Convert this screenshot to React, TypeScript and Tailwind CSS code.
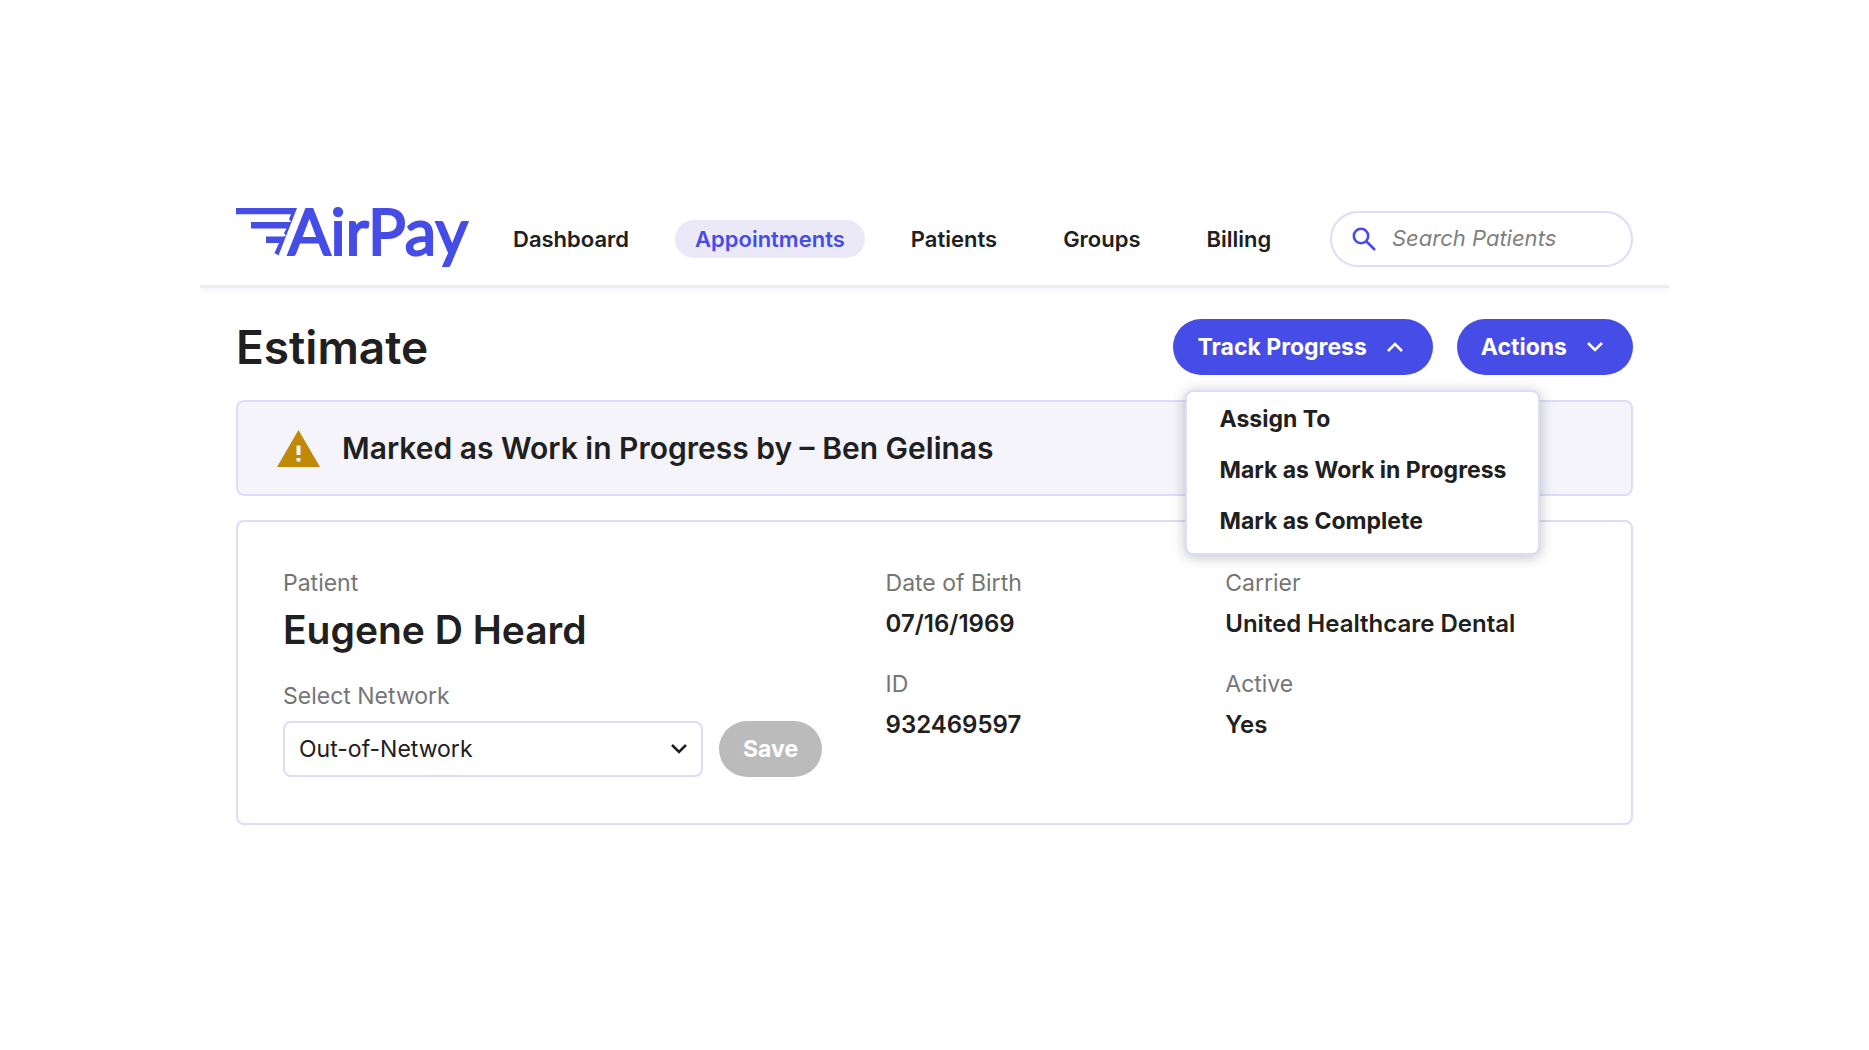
import React from 'react';

const navItems = ['Dashboard', 'Appointments', 'Patients', 'Groups', 'Billing'];
const menuItems = ['Assign To', 'Mark as Work in Progress', 'Mark as Complete'];

const Logo = () => (
  <a href="#" aria-label="AirPay" className="shrink-0">
    <svg width="233" height="64" viewBox="0 0 233 64" className="overflow-visible" fill="#464ce6">
      <path d="M0 1H61L42.500 48.500L38.500 46L43 36H30V29.500H47L50 29L48 26L50.500 21.500H15V15H55L53 12L55 7.200H0Z" />
      <text
        x="52"
        y="48"
        fontSize="63"
        fontFamily="Lato, sans-serif"
        stroke="#464ce6"
        strokeWidth="2.2"
      >
        AirPay
      </text>
    </svg>
  </a>
);

const Chevron = ({ up = false }: { up?: boolean }) => (
  <svg width="24" height="24" viewBox="0 0 24 24" fill="none" stroke="currentColor" strokeWidth="2.6">
    <path d={up ? 'M5 16l7-7 7 7' : 'M5 8l7 7 7-7'} />
  </svg>
);

const Field = ({ label, value }: { label: string; value: string }) => (
  <div>
    <dt className="text-[23px] leading-8 text-[#757575]">{label}</dt>
    <dd className="mt-[9px] text-2xl leading-8 font-semibold">{value}</dd>
  </div>
);

const Header = () => (
  <header className="flex h-24 items-center gap-6 border-b-3 border-[#ececee] px-9 shadow-[0_6px_4px_-3px_rgba(70,76,230,0.06)]">
    <Logo />
    <nav className="flex items-center gap-[26px]">
      {navItems.map((item) => (
        <a
          key={item}
          href="#"
          className={
            item === 'Appointments'
              ? 'rounded-full bg-[#ebe9f8] px-5 py-1 text-[22px] leading-[30px] font-semibold text-[#464ce6]'
              : 'px-5 py-1 text-[22px] leading-[30px] font-semibold'
          }
        >
          {item}
        </a>
      ))}
    </nav>
    <label className="ml-auto flex h-14 w-[303px] items-center gap-4 rounded-full border-2 border-[#dcdcfb] px-5">
      <svg width="24" height="24" viewBox="0 0 24 24" fill="none" stroke="#464ce6" strokeWidth="2.6" className="shrink-0">
        <circle cx="9" cy="9" r="7.2" />
        <path d="M14 14l9 9" />
      </svg>
      <input
        type="search"
        aria-label="Search Patients"
        placeholder="Search Patients"
        className="w-full min-w-0 text-[22px] italic outline-none placeholder:text-[#808080]"
      />
    </label>
  </header>
);

const App = () => {
  return (
    <div className="min-h-screen bg-white px-50 pt-48 font-[Inter,sans-serif] text-[#202020]">
      <Header />
      <main className="px-9 pt-[31px]">
        <div className="flex items-center justify-between">
          <h1 className="text-[46px] leading-14 font-semibold">Estimate</h1>
          <div className="flex gap-6">
            <div className="relative">
              <button className="flex h-14 items-center gap-4 rounded-full bg-[#464ce6] pr-[26px] pl-6 text-[23px] font-bold text-white">
                Track Progress
                <Chevron up />
              </button>
              <ul className="absolute top-[71px] left-3 z-10 rounded-lg border-2 border-[#dcdcfb] bg-white pt-0.5 pb-1.5 shadow-[0_2px_14px_rgba(0,0,0,0.25)]">
                {menuItems.map((item) => (
                  <li key={item}>
                    <button className="w-full px-8 py-2 text-left text-[23px] leading-[35px] font-bold whitespace-nowrap">
                      {item}
                    </button>
                  </li>
                ))}
              </ul>
            </div>
            <button className="flex h-14 items-center gap-4 rounded-full bg-[#464ce6] pr-[26px] pl-6 text-[23px] font-bold text-white">
              Actions
              <Chevron />
            </button>
          </div>
        </div>

        <div className="mt-[25px] flex h-24 items-center gap-[22px] rounded-lg border-2 border-[#dcdcfb] bg-[#f6f4fb] px-[39px]">
          <svg width="43" height="37" viewBox="0 0 43 37">
            <path d="M21.500 0L43 37H0z" fill="#c08a06" />
            <path d="M19.500 15.500h4v9.500h-4zM19.500 28h4v3.500h-4z" fill="#f6f4fb" />
          </svg>
          <p className="text-[30px] font-semibold">Marked as Work in Progress by – Ben Gelinas</p>
        </div>

        <section className="mt-6 grid grid-cols-[603fr_340fr_361fr] rounded-lg border-2 border-[#dcdcfb] px-[45px] pt-[45px] pb-[46px]">
          <div>
            <p className="text-[23px] leading-8 text-[#757575]">Patient</p>
            <h2 className="mt-[7px] text-[39px] leading-12 font-semibold">Eugene D Heard</h2>
            <label htmlFor="network" className="mt-[26px] block text-[23px] leading-8 text-[#757575]">
              Select Network
            </label>
            <div className="mt-[9px] flex gap-4">
              <div className="relative">
                <select
                  id="network"
                  className="h-14 w-[420px] appearance-none rounded-lg border-2 border-[#dcdcfb] bg-white px-3.5 text-[23px]"
                >
                  <option>Out-of-Network</option>
                  <option>In-Network</option>
                </select>
                <span className="pointer-events-none absolute inset-y-0 right-3 flex items-center">
                  <Chevron />
                </span>
              </div>
              <button disabled className="h-14 rounded-full bg-[#bbbbbb] px-6 text-[23px] font-bold text-white">
                Save
              </button>
            </div>
          </div>
          <dl className="flex flex-col gap-7">
            <Field label="Date of Birth" value="07/16/1969" />
            <Field label="ID" value="932469597" />
          </dl>
          <dl className="flex flex-col gap-7">
            <Field label="Carrier" value="United Healthcare Dental" />
            <Field label="Active" value="Yes" />
          </dl>
        </section>
      </main>
    </div>
  );
};

export default App;
